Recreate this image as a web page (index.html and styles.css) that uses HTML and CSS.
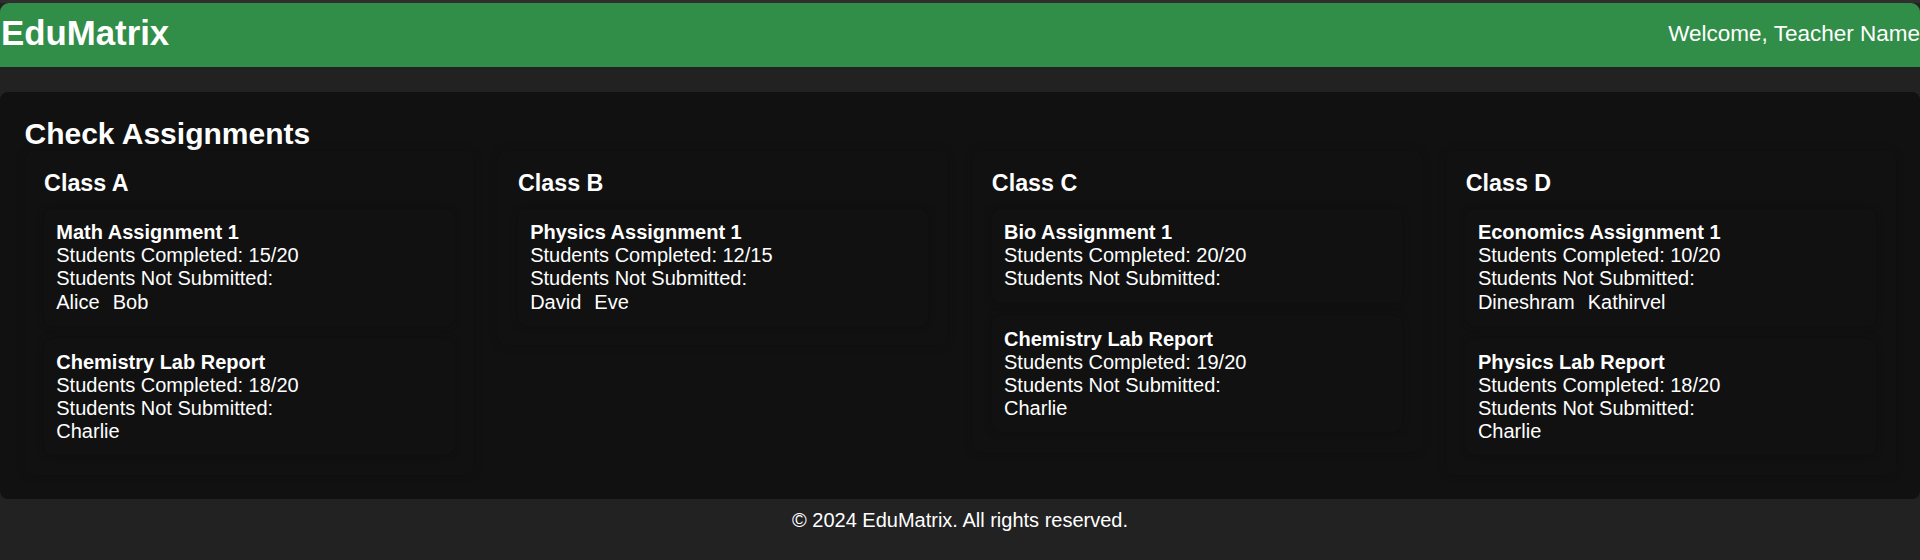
FILE: index.html
```html
<!DOCTYPE html>
<html lang="en">
<head>
<meta charset="utf-8">
<title>EduMatrix - Check Assignments</title>
<link rel="stylesheet" href="styles.css">
</head>
<body>
<header class="topbar">
  <h1 class="brand">EduMatrix</h1>
  <div class="welcome">Welcome, Teacher Name</div>
</header>
<main class="panel">
  <h2 class="panel-title">Check Assignments</h2>
  <div class="classes">
    <section class="class-card">
      <h3 class="class-name">Class A</h3>
      <div class="assignments">
        <div class="assignment">
          <div class="a-title">Math Assignment 1</div>
          <div>Students Completed: 15/20</div>
          <div>Students Not Submitted:</div>
          <div class="names"><span>Alice</span> <span>Bob</span></div>
        </div>
        <div class="assignment">
          <div class="a-title">Chemistry Lab Report</div>
          <div>Students Completed: 18/20</div>
          <div>Students Not Submitted:</div>
          <div class="names"><span>Charlie</span></div>
        </div>
      </div>
    </section>
    <section class="class-card">
      <h3 class="class-name">Class B</h3>
      <div class="assignments">
        <div class="assignment">
          <div class="a-title">Physics Assignment 1</div>
          <div>Students Completed: 12/15</div>
          <div>Students Not Submitted:</div>
          <div class="names"><span>David</span> <span>Eve</span></div>
        </div>
      </div>
    </section>
    <section class="class-card">
      <h3 class="class-name">Class C</h3>
      <div class="assignments">
        <div class="assignment">
          <div class="a-title">Bio Assignment 1</div>
          <div>Students Completed: 20/20</div>
          <div>Students Not Submitted:</div>
        </div>
        <div class="assignment">
          <div class="a-title">Chemistry Lab Report</div>
          <div>Students Completed: 19/20</div>
          <div>Students Not Submitted:</div>
          <div class="names"><span>Charlie</span></div>
        </div>
      </div>
    </section>
    <section class="class-card">
      <h3 class="class-name">Class D</h3>
      <div class="assignments">
        <div class="assignment">
          <div class="a-title">Economics Assignment 1</div>
          <div>Students Completed: 10/20</div>
          <div>Students Not Submitted:</div>
          <div class="names"><span>Dineshram</span> <span>Kathirvel</span></div>
        </div>
        <div class="assignment">
          <div class="a-title">Physics Lab Report</div>
          <div>Students Completed: 18/20</div>
          <div>Students Not Submitted:</div>
          <div class="names"><span>Charlie</span></div>
        </div>
      </div>
    </section>
  </div>
</main>
<footer class="footer">© 2024 EduMatrix. All rights reserved.</footer>
</body>
</html>
```

FILE: styles.css
```css
* {
  box-sizing: border-box;
}

html, body {
  margin: 0;
  padding: 0;
}

body {
  background: #222222;
  color: #ffffff;
  font-family: "Liberation Sans", Arial, sans-serif;
  font-size: 20px;
  border-top: 3px solid #2e2e2e;
}

.topbar {
  display: flex;
  justify-content: space-between;
  align-items: center;
  height: 64px;
  padding: 0 0 4px 1px;
  background: #318e48;
  border-radius: 9px 9px 0 0;
}

.brand {
  margin: 0;
  font-size: 34.8px;
  font-weight: bold;
  line-height: 1.15;
}

.welcome {
  font-size: 22.5px;
  line-height: 1.15;
  padding-top: 2px;
}

.panel {
  margin-top: 25px;
  background: #111111;
  border-radius: 8px;
  padding: 24.5px;
}

.panel-title {
  margin: 0;
  font-size: 30px;
  font-weight: bold;
  line-height: 34px;
}

.classes {
  display: grid;
  grid-template-columns: repeat(4, 1fr);
  gap: 24.5px;
  align-items: start;
}

.class-card {
  background: #111111;
  border-radius: 8px;
  padding: 19.6px;
  box-shadow: 0 0 10px rgba(0, 0, 0, 0.18);
}

.class-name {
  margin: 0 0 12.6px;
  font-size: 23.3px;
  font-weight: bold;
  line-height: 26.4px;
}

.assignments {
  display: flex;
  flex-direction: column;
  gap: 12.8px;
}

.assignment {
  background: #111111;
  border-radius: 8px;
  padding: 12.2px;
  line-height: 23.1px;
  box-shadow: 0 0 8px rgba(0, 0, 0, 0.24);
}

.a-title {
  font-weight: bold;
}

.names span {
  margin-right: 7.5px;
}

.footer {
  text-align: center;
  padding: 10px 0 14px;
  line-height: 23px;
  background: #222222;
}
```
